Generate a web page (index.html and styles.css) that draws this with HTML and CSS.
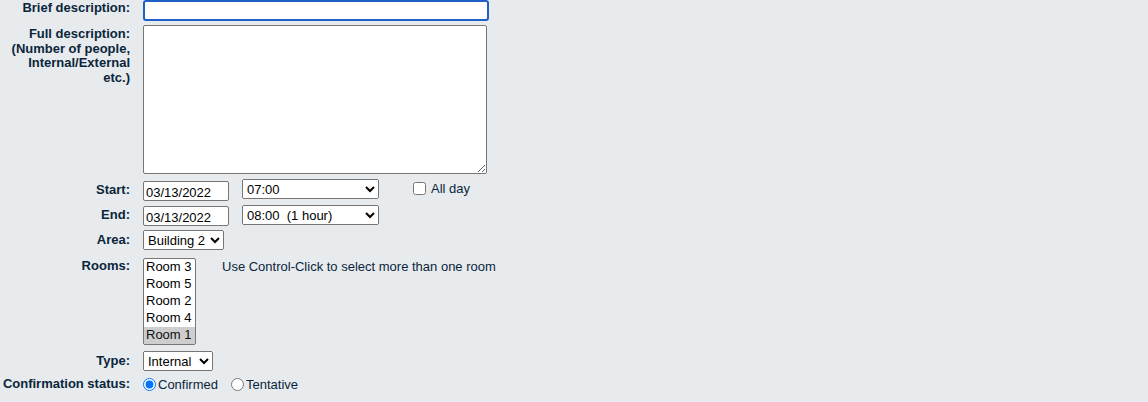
FILE: index.html
```html
<!DOCTYPE html>
<html lang="en">
<head>
<meta charset="utf-8">
<title>Edit entry</title>
<link rel="stylesheet" href="styles.css">
</head>
<body>
<form class="form">
  <div class="row r-brief">
    <label class="label lab-brief" for="name">Brief description:</label>
    <input id="name" class="brief" type="text" value="">
  </div>
  <div class="row r-full">
    <label class="label lab-full" for="desc">Full description:<br>(Number of people,<br>Internal/External<br>etc.)</label>
    <textarea id="desc" class="full"></textarea>
  </div>
  <div class="row r-start center">
    <label class="label">Start:</label>
    <input class="date date-start" type="text" value="03/13/2022">
    <select class="time">
      <option>07:00</option>
    </select>
    <label class="allday"><input type="checkbox" class="check"><span>All day</span></label>
  </div>
  <div class="row r-end center">
    <label class="label">End:</label>
    <input class="date date-end" type="text" value="03/13/2022">
    <select class="time">
      <option>08:00&nbsp;&nbsp;(1 hour)</option>
    </select>
  </div>
  <div class="row r-area center">
    <label class="label">Area:</label>
    <select class="area">
      <option>Building 2</option>
    </select>
  </div>
  <div class="row r-rooms">
    <label class="label lab-rooms">Rooms:</label>
    <select class="rooms" multiple size="5">
      <option>Room 3</option>
      <option>Room 5</option>
      <option>Room 2</option>
      <option>Room 4</option>
      <option selected>Room 1</option>
    </select>
    <span class="hint">Use Control-Click to select more than one room</span>
  </div>
  <div class="row r-type center">
    <label class="label">Type:</label>
    <select class="type">
      <option>Internal</option>
    </select>
  </div>
  <div class="row r-conf center">
    <label class="label">Confirmation status:</label>
    <label class="radio"><input type="radio" name="conf" checked><span>Confirmed</span></label>
    <label class="radio radio-2"><input type="radio" name="conf"><span>Tentative</span></label>
  </div>
</form>
</body>
</html>
```

FILE: styles.css
```css
html, body {
  margin: 0;
  padding: 0;
  background: #e7ebee;
  color: #0b263b;
  font-family: "Liberation Sans", Arial, sans-serif;
}

.form {
  display: flex;
  flex-direction: column;
}

.row {
  display: flex;
  align-items: flex-start;
}

.row.center {
  align-items: center;
}

.label {
  flex: none;
  width: 130px;
  margin-right: 13px;
  text-align: right;
  font-weight: bold;
  font-size: 13px;
  line-height: 14.7px;
}

input, select, textarea {
  font-family: "Liberation Sans", Arial, sans-serif;
  font-size: 13px;
  color: #000;
  box-sizing: border-box;
  margin: 0;
}

.r-brief { margin-top: 0; }
.r-full { margin-top: 4px; }
.r-start { margin-top: 5px; }
.r-end { margin-top: 4px; }
.r-area { margin-top: 4px; }
.r-rooms { margin-top: 8px; }
.r-type { margin-top: 6px; }
.r-conf { margin-top: 6px; }

.lab-brief {
  margin-top: 1px;
}

.brief {
  width: 346px;
  height: 21px;
  border: 2px solid #1f60c8;
  border-radius: 3px;
  background: #fff;
  outline: none;
  padding: 1px 2px;
}

.lab-full {
  margin-top: 2px;
}

.full {
  width: 344px;
  height: 149px;
  border: 1px solid #767676;
  border-radius: 2px;
  background: #fff;
  padding: 2px;
  resize: both;
}

.date {
  width: 86px;
  height: 20px;
  border: 1px solid #767676;
  border-radius: 2px;
  background: #fff;
  padding: 2px 2px 0;
  margin-right: 13px;
}

.date-start { align-self: flex-start; margin-top: 2px; }
.date-end { align-self: flex-start; margin-top: 1px; }

.r-start .time, .r-end .time { align-self: flex-start; }

.time {
  width: 137px;
  height: 20px;
}

.area {
  width: 81px;
  height: 20px;
}

.type {
  width: 70px;
  height: 20px;
}

.allday {
  display: flex;
  align-items: center;
  margin-left: 34px;
  font-size: 13px;
  align-self: flex-start;
  margin-top: 2px;
}

.check {
  width: 13px;
  height: 13px;
  margin: 0 5px 0 0;
}

.lab-rooms {
  margin-top: 1px;
}

.rooms {
  width: 53px;
  height: 87px;
  overflow: hidden;
}

.rooms option {
  padding: 0 2px;
  line-height: 17px;
  height: 17px;
}

.hint {
  margin-left: 26px;
  margin-top: 1px;
  font-size: 13px;
  line-height: 15px;
}

.radio {
  display: flex;
  align-items: center;
  font-size: 13px;
}

.radio input {
  width: 13px;
  height: 13px;
  margin: 0 2px 0 0;
}

.radio-2 {
  margin-left: 13px;
}
```
